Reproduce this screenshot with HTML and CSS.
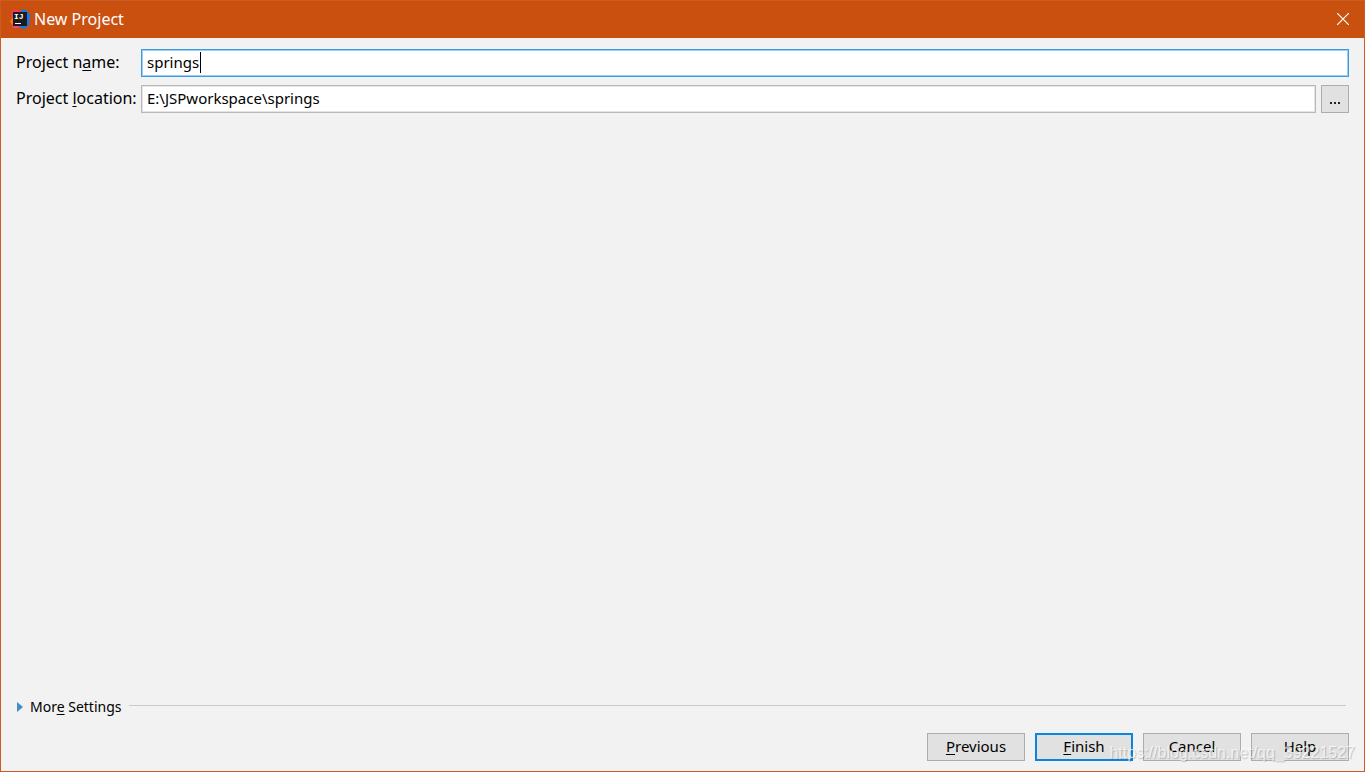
FILE: index.html
```html
<!DOCTYPE html>
<html lang="en">
<head>
  <meta charset="UTF-8">
  <title>New Project</title>
  <link rel="stylesheet" href="styles.css">
</head>
<body>
  <div class="window">
    <header class="titlebar">
      <svg class="logo" viewBox="0 0 20 20" aria-hidden="true">
        <path d="M2 1 L9 1 L12 4 L9 12 L3 12 L1 8 Z" fill="#fe315d"/>
        <path d="M0 12 L4 7 L8 12 L6 17 L2 16 Z" fill="#f97a12"/>
        <path d="M2 15 L7 13 L12 17 L9 19 L3 19 Z" fill="#f0457c"/>
        <path d="M10 3 L14 0 L20 5 L19 16 L14 20 L8 17 Z" fill="#087cfa"/>
        <rect x="3" y="3" width="14" height="14" fill="#1b1b1b"/>
        <text class="logo-text" x="4" y="10">IJ</text>
        <rect x="5" y="14" width="6" height="1" fill="#fff"/>
      </svg>
      <h1>New Project</h1>
      <button class="close" aria-label="Close">
        <svg viewBox="0 0 12 12"><path d="M0 0 L12 12 M12 0 L0 12" stroke="#fff" stroke-width="1.2"/></svg>
      </button>
    </header>

    <main class="content">
      <form class="fields">
        <label for="projectName">Project n<u>a</u>me:</label>
        <div class="field">
          <input type="text" id="projectName" class="active" value="springs">
          <span class="caret"></span>
        </div>

        <label for="projectLocation">Project <u>l</u>ocation:</label>
        <div class="field">
          <input type="text" id="projectLocation" value="E:\JSPworkspace\springs">
          <button type="button" class="browse" aria-label="Browse"><i></i><i></i><i></i></button>
        </div>
      </form>

      <button class="more">
        <svg viewBox="0 0 6 10"><path d="M0 0 L6 5 L0 10 Z" fill="#3f8fc0"/></svg>
        <span>Mor<u>e</u> Settings</span>
      </button>

      <footer class="buttons">
        <button><u>P</u>revious</button>
        <button class="default"><u>F</u>inish</button>
        <button>Cancel</button>
        <button>Help</button>
      </footer>
    </main>

    <div class="watermark">https://blog.csdn.net/qq_39221527</div>
  </div>
</body>
</html>
```

FILE: styles.css
```css
* { box-sizing: border-box; margin: 0; padding: 0; }

body {
  font-family: "Noto Sans", "Open Sans", sans-serif;
  font-size: 15px;
  line-height: 20px;
  color: #000;
}

button, input {
  font: inherit;
  color: inherit;
}

u {
  text-decoration-thickness: 1px;
  text-underline-offset: 2px;
  text-decoration-skip-ink: none;
}

.window {
  position: relative;
  display: flex;
  flex-direction: column;
  min-height: 100vh;
  background: #f2f2f2;
  border: 1px solid #cb5c24;
}

/* Title bar */
.titlebar {
  display: flex;
  align-items: center;
  height: 37px;
  padding: 0 14px 2px 9px;
  background: #ca5010;
  color: #fff;
}
.logo {
  width: 20px;
  height: 20px;
  margin-right: 4px;
}
.logo-text {
  font: bold 8px "Liberation Mono", monospace;
  fill: #fff;
}
.titlebar h1 {
  flex: 1;
  font-size: 16px;
  font-weight: normal;
}
.close {
  display: flex;
  background: none;
  border: none;
}
.close svg {
  width: 14px;
  height: 14px;
  padding: 1px;
}

/* Fields */
.content {
  flex: 1;
  display: flex;
  flex-direction: column;
  padding: 11px 15px 10px;
}
.fields {
  display: grid;
  grid-template-columns: 119px 1fr;
  gap: 8px 6px;
  align-items: center;
}
.fields label {
  padding-bottom: 2px;
  font-size: 16px;
  white-space: nowrap;
}
.field {
  position: relative;
  display: flex;
  gap: 5px;
}
.field input {
  flex: 1;
  min-width: 0;
  height: 28px;
  padding: 0 5px 2px;
  background: #fff;
  border: 1px solid #b9b9b9;
  box-shadow: inset 0 0 0 1px #e4e4e4;
  outline: none;
}
.field input.active {
  border-color: #3c9ae0;
  box-shadow: inset 0 0 0 1px #9dcdf0;
}
.caret {
  position: absolute;
  left: 59px;
  top: 3px;
  width: 1px;
  height: 21px;
  background: #000;
}
.browse {
  display: flex;
  align-items: flex-end;
  justify-content: center;
  gap: 2px;
  width: 28px;
  padding-bottom: 8px;
  background: #e1e1e1;
  border: 1px solid #adadad;
}
.browse i {
  width: 2px;
  height: 2px;
  background: #222;
}

/* Collapsed section */
.more {
  display: flex;
  align-items: center;
  gap: 7px;
  margin-top: auto;
  padding-right: 3px;
  background: none;
  border: none;
  font-size: 14px;
}
.more svg {
  width: 6px;
  height: 10px;
  margin-left: 1px;
}
.more::after {
  content: "";
  flex: 1;
  height: 1px;
  margin-bottom: 3px;
  background: #cbcbcb;
}

/* Bottom buttons */
.buttons {
  display: flex;
  justify-content: flex-end;
  gap: 10px;
  margin-top: 16px;
}
.buttons button {
  width: 98px;
  height: 28px;
  padding-bottom: 2px;
  background: #e1e1e1;
  border: 1px solid #adadad;
}
.buttons .default {
  border: 2px solid #0a84dc;
}

.watermark {
  position: absolute;
  right: 9px;
  bottom: 8px;
  font-family: "Liberation Sans", Arial, sans-serif;
  font-size: 16px;
  color: rgba(255, 255, 255, 0.7);
  text-shadow: 1px 1px 1px rgba(0, 0, 0, 0.2);
  pointer-events: none;
}
```
